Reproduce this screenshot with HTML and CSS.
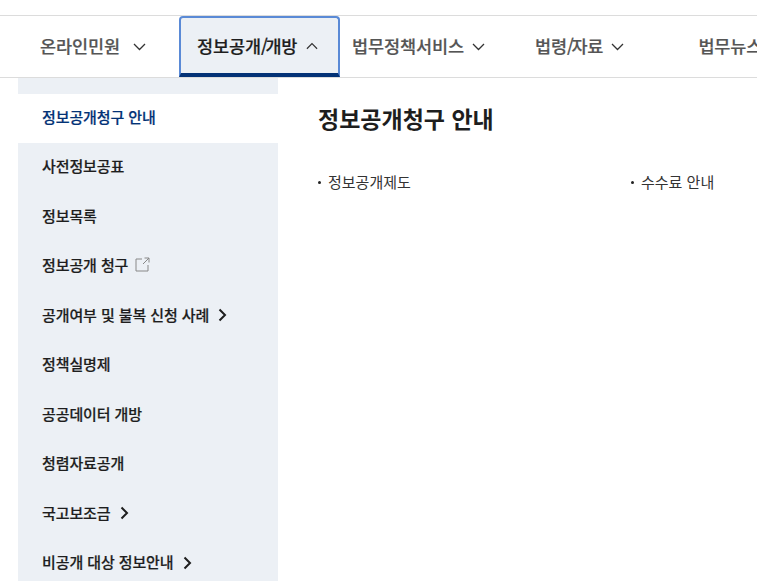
FILE: index.html
```html
<!DOCTYPE html>
<html lang="ko">
<head>
<meta charset="utf-8">
<title>정보공개청구 안내</title>
<link rel="stylesheet" href="styles.css">
</head>
<body>
<nav class="gnb">
  <a class="gnb-item first">온라인민원<svg class="chev" viewBox="0 0 13 8"><path d="M1 1l5.5 5.5L12 1"/></svg></a>
  <a class="gnb-item active">정보공개<span class="slash">/</span>개방<svg class="chev" viewBox="0 0 13 8"><path d="M1 7l5.5-5.5L12 7"/></svg></a>
  <a class="gnb-item third">법무정책서비스<svg class="chev" viewBox="0 0 13 8"><path d="M1 1l5.5 5.5L12 1"/></svg></a>
  <a class="gnb-item fourth">법령<span class="slash">/</span>자료<svg class="chev" viewBox="0 0 13 8"><path d="M1 1l5.5 5.5L12 1"/></svg></a>
  <a class="gnb-item fifth">법무뉴스</a>
</nav>
<div class="layout">
  <aside class="side">
    <a class="side-item current">정보공개청구 안내</a>
    <a class="side-item">사전정보공표</a>
    <a class="side-item">정보목록</a>
    <a class="side-item">정보공개 청구<svg class="ext" viewBox="0 0 15 15"><path d="M7 2H1v12h12V8M8 7l6-6M9.5 1H14v4.5"/></svg></a>
    <a class="side-item">공개여부 및 불복 신청 사례<svg class="arrow" viewBox="0 0 9 14"><path d="M1.5 1.5L7 7l-5.5 5.5"/></svg></a>
    <a class="side-item">정책실명제</a>
    <a class="side-item">공공데이터 개방</a>
    <a class="side-item">청렴자료공개</a>
    <a class="side-item">국고보조금<svg class="arrow" viewBox="0 0 9 14"><path d="M1.5 1.5L7 7l-5.5 5.5"/></svg></a>
    <a class="side-item">비공개 대상 정보안내<svg class="arrow" viewBox="0 0 9 14"><path d="M1.5 1.5L7 7l-5.5 5.5"/></svg></a>
  </aside>
  <main class="content">
    <h1 class="title">정보공개청구 안내</h1>
    <ul class="links">
      <li class="link">정보공개제도</li>
      <li class="link">수수료 안내</li>
    </ul>
  </main>
</div>
</body>
</html>
```

FILE: styles.css
```css
* { box-sizing: border-box; }
html, body { margin: 0; padding: 0; height: 100%; overflow: hidden; background: #fff; }
body {
  font-family: "Noto Sans CJK KR", "Noto Sans", sans-serif;
  color: #1e1e1e;
  padding-top: 15px;
}
.gnb {
  display: flex;
  height: 63px;
  padding-left: 40px;
  border-top: 1px solid #dcdcdc;
  border-bottom: 1px solid #dcdcdc;
  white-space: nowrap;
  overflow: hidden;
}
.gnb-item {
  display: flex;
  align-items: center;
  flex: none;
  font-size: 17.5px;
  font-weight: 500;
  letter-spacing: -0.1px;
  -webkit-text-stroke: 0.2px currentColor;
  color: #555;
  padding-bottom: 3px;
}
.slash { letter-spacing: -2.5px; }
.chev {
  width: 13px;
  height: 8px;
  margin-left: 8px;
  margin-top: 3px;
  fill: none;
  stroke: #333;
  stroke-width: 1.3;
}
.first .chev { margin-left: 13px; }
.gnb-item.active {
  margin-left: 33px;
  width: 161px;
  height: 61px;
  padding: 0 0 0 16px;
  color: #1e1e1e;
  background: #ecf0f5;
  border: 2px solid #5a8ad6;
  border-bottom: 4px solid #033276;
  border-radius: 4px 4px 0 0;
}
.gnb-item.active .chev { margin-top: 0; margin-left: 9px; width: 12px; }
.third { margin-left: 12px; }
.fourth { margin-left: 50px; }
.fifth { margin-left: 74px; }
.layout {
  display: flex;
  padding-left: 18px;
}
.side {
  flex: none;
  width: 260px;
  padding-top: 15.7px;
  background: #ecf0f5;
}
.side-item {
  display: flex;
  align-items: center;
  height: 49.5px;
  padding: 0 0 4px 24px;
  font-size: 15px;
  font-weight: 500;
  letter-spacing: -0.1px;
  -webkit-text-stroke: 0.2px currentColor;
  color: #1e1e1e;
  white-space: nowrap;
}
.side-item.current { background: #fff; color: #033276; }
.ext {
  width: 15px;
  height: 15px;
  margin-left: 7px;
  fill: none;
  stroke: #888;
  stroke-width: 1;
}
.arrow {
  width: 9px;
  height: 14px;
  margin-left: 9px;
  margin-top: 2px;
  fill: none;
  stroke: #1e1e1e;
  stroke-width: 2;
}
.content {
  flex: 1;
  padding: 22px 0 0 40px;
}
.title {
  margin: 0;
  font-size: 23px;
  font-weight: 700;
  line-height: 36px;
  letter-spacing: 0;
  color: #1e1e1e;
}
.links {
  display: flex;
  list-style: none;
  margin: 34px 0 0;
  padding: 0;
}
.link {
  position: relative;
  width: 313px;
  padding-left: 10px;
  font-size: 15px;
  line-height: 24px;
  letter-spacing: 0;
  color: #333;
}
.link::before {
  content: "";
  position: absolute;
  left: 0;
  top: 11px;
  width: 3px;
  height: 3px;
  border-radius: 50%;
  background: #222;
}
```
